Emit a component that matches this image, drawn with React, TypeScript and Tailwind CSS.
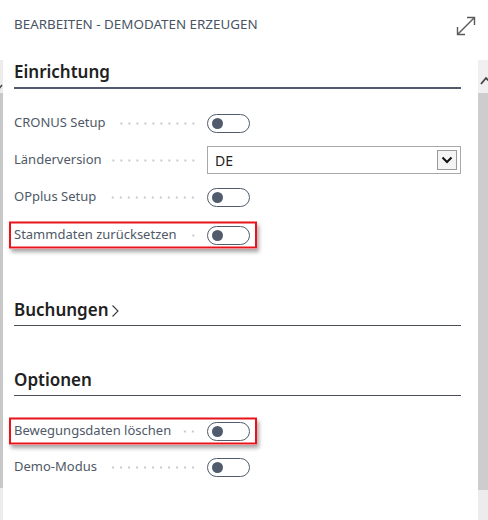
import React from "react";

const FONT = { fontFamily: '"Noto Sans","Open Sans",sans-serif' };

function Toggle() {
  return (
    <div className="flex h-[19px] w-[43px] items-center rounded-full border border-[#505c6d] bg-white pl-[4px]">
      <div className="h-[11px] w-[11px] rounded-full bg-[#505c6d]" />
    </div>
  );
}

function Dots() {
  return (
    <div className="mx-[10px] h-[3px] flex-1 bg-[radial-gradient(circle,#c4c8cc_0.9px,transparent_1.3px)] bg-[length:8px_3px] bg-[position:right_center]" />
  );
}

function Row({ label, h, highlight, children }: { label: string; h: string; highlight?: boolean; children: React.ReactNode }) {
  return (
    <div className={`relative flex items-center ${h}`}>
      {highlight && (
        <div className="pointer-events-none absolute left-[-5px] top-1/2 h-[27px] w-[248px] -translate-y-1/2 border-2 border-[#e8141a] shadow-[2px_3px_4px_rgba(0,0,0,0.35)]" />
      )}
      <div className="flex w-[193px] items-center">
        <span className="whitespace-nowrap text-[13px] text-[#4f5967]">{label}</span>
        <Dots />
      </div>
      {children}
    </div>
  );
}

function Heading({ text, thick, chevron }: { text: string; thick?: boolean; chevron?: boolean }) {
  return (
    <div className={`flex items-end pb-[4px] ${thick ? "border-b-2 border-[#505c6d]" : "border-b border-[#4a4f57]"}`}>
      <span className="text-[17px] font-semibold leading-[22px] text-[#212121]">{text}</span>
      {chevron && (
        <svg width="9" height="14" viewBox="0 0 9 14" className="mb-[3px] ml-[2px]">
          <path d="M1.5 1.5 L7 7 L1.5 12.5" fill="none" stroke="#3a3a3a" strokeWidth="1.1" />
        </svg>
      )}
    </div>
  );
}

export default function App() {
  return (
    <div className="relative flex h-[520px] w-[488px] flex-col overflow-hidden bg-white" style={FONT}>
      {/* title bar */}
      <div className="flex h-[60px] shrink-0 items-start justify-between pl-[14px] pr-[11px] pt-[14px]">
        <span className="text-[13.4px] leading-[20px] text-[#4a5564]">BEARBEITEN - DEMODATEN ERZEUGEN</span>
        <svg width="22" height="22" viewBox="0 0 22 22" className="mt-[1px]">
          <path d="M2.5 19.5 L19.5 2.5" stroke="#5a5a5a" strokeWidth="1.4" fill="none" />
          <path d="M12 2.5 L19.5 2.5 L19.5 10" stroke="#5a5a5a" strokeWidth="1.4" fill="none" />
          <path d="M2.5 12 L2.5 19.5 L10 19.5" stroke="#5a5a5a" strokeWidth="1.4" fill="none" />
        </svg>
      </div>

      <div className="flex flex-1">
        {/* left strip */}
        <div className="flex w-[3px] shrink-0 flex-col">
          <div className="relative h-[33px] bg-[#ececec]">
            <svg width="3" height="10" viewBox="0 0 3 10" className="absolute left-0 top-[22px]">
              <path d="M-2 8 L2 3" stroke="#444" strokeWidth="1.5" />
            </svg>
          </div>
          <div className="h-[395px] bg-[#c8c8c8]" />
          <div className="flex-1 bg-[#ececec]" />
        </div>

        {/* content */}
        <div className="flex flex-1 flex-col pl-[11px] pr-[17px]">
          <div className="h-[1px]" />
          <Heading text="Einrichtung" thick />
          <div className="h-[15px]" />
          <Row label="CRONUS Setup" h="h-[38px]">
            <Toggle />
          </Row>
          <Row label="Länderversion" h="h-[36px]">
            <div className="flex h-[28px] flex-1 items-center justify-between border border-[#a8a8a8] pl-[7px] pr-[3px]">
              <span className="text-[14px] text-[#222]">DE</span>
              <div className="flex h-[20px] w-[20px] items-center justify-center border border-[#9a9a9a] bg-[#f4f4f4]">
                <svg width="12" height="8" viewBox="0 0 12 8">
                  <path d="M1.5 1.5 L6 6 L10.5 1.5" fill="none" stroke="#111" strokeWidth="2" />
                </svg>
              </div>
            </div>
          </Row>
          <Row label="OPplus Setup" h="h-[38px]">
            <Toggle />
          </Row>
          <Row label="Stammdaten zurücksetzen" h="h-[38px]" highlight>
            <Toggle />
          </Row>
          <div className="h-[45px]" />
          <Heading text="Buchungen" chevron />
          <div className="h-[43px]" />
          <Heading text="Optionen" />
          <div className="h-[17px]" />
          <Row label="Bewegungsdaten löschen" h="h-[36px]" highlight>
            <Toggle />
          </Row>
          <Row label="Demo-Modus" h="h-[36px]">
            <Toggle />
          </Row>
        </div>

        {/* right strip */}
        <div className="flex w-[10px] shrink-0 flex-col">
          <div className="relative h-[33px] bg-[#f0f0f0]">
            <svg width="10" height="10" viewBox="0 0 10 10" className="absolute left-[2px] top-[16px]">
              <path d="M1 8 L6 2 L9 5" stroke="#444" strokeWidth="1.8" fill="none" />
            </svg>
          </div>
          <div className="h-[397px] bg-[#cdcdcd]" />
          <div className="flex-1 bg-[#ececec]" />
        </div>
      </div>
    </div>
  );
}
